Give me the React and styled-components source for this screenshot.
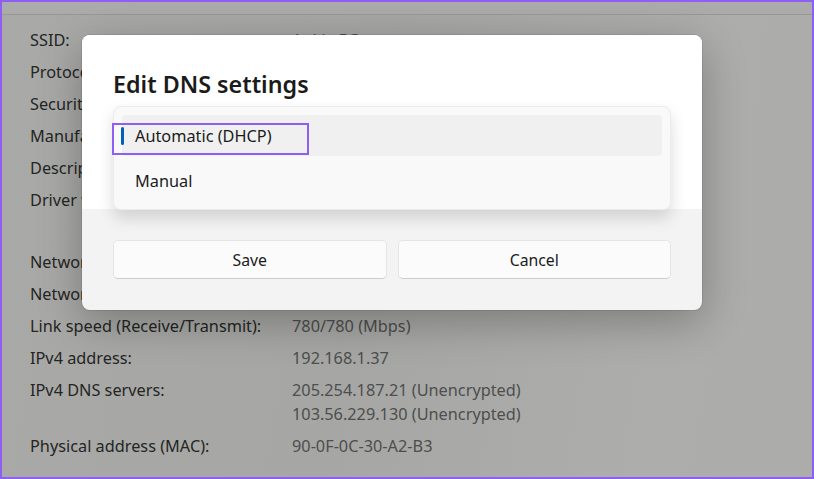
import React from 'react'
import styled, {createGlobalStyle} from 'styled-components'

const GlobalStyle = createGlobalStyle`
  html, body { margin: 0; padding: 0; }
  body { font-family: "Noto Sans", "Open Sans", sans-serif; }
`

const Frame = styled.div`
  position: relative;
  width: 814px;
  height: 479px;
  box-sizing: border-box;
  border: 2px solid #8d5ff5;
  overflow: hidden;
  background: linear-gradient(100deg, #a9aaa7 0%, #a6a7a4 45%, #adaeab 80%, #acadaa 100%);
`

const TopBar = styled.div`
  height: 12px;
  border-bottom: 1px solid #979896;
  background: #aaabaa;
`

const Details = styled.div`
  padding: 9px 0 0 28px;
  display: flex;
  flex-direction: column;
`

const Section = styled.div`
  display: flex;
  flex-direction: column;
  & + & { margin-top: 30px; }
`

const Row = styled.div`
  display: grid;
  grid-template-columns: 262px 1fr;
  padding: 4px 0;
  line-height: 24px;
  font-size: 16.3px;
  >.label { color: #242524; }
  >.value { color: #4d4e4d; display: flex; flex-direction: column; }
`

const Dialog = styled.div`
  position: absolute;
  left: 80px;
  top: 33px;
  width: 620px;
  height: 275px;
  border-radius: 8px;
  background: #f3f3f3;
  box-shadow: 0 0 0 1px rgba(0,0,0,0.08), 0 12px 44px rgba(0,0,0,0.28);
  display: flex;
  flex-direction: column;
`

const DialogBody = styled.div`
  position: relative;
  height: 174px;
  box-sizing: border-box;
  background: #ffffff;
  border-radius: 8px 8px 0 0;
  padding: 34px 31px 0 31px;
`

const Title = styled.h2`
  margin: 0;
  font-size: 23.3px;
  font-weight: 600;
  line-height: 30px;
  color: #1b1b1b;
`

const Popup = styled.div`
  position: absolute;
  left: 31px;
  top: 71px;
  width: 558px;
  box-sizing: border-box;
  padding: 8px;
  display: flex;
  flex-direction: column;
  gap: 4px;
  background: #f9f9f9;
  border: 1px solid rgba(0,0,0,0.05);
  border-radius: 8px;
  box-shadow: 0 8px 16px rgba(0,0,0,0.14);
`

const Option = styled.div`
  position: relative;
  height: 41px;
  display: flex;
  align-items: center;
  padding-left: 13px;
  border-radius: 4px;
  font-size: 16.3px;
  color: #1b1b1b;
  background: ${p => p.selected ? '#f0f0f0' : 'transparent'};
`

const Indicator = styled.span`
  position: absolute;
  left: -1px;
  top: 12px;
  width: 3px;
  height: 18px;
  border-radius: 2px;
  background: #005fb8;
`

const Highlight = styled.span`
  position: absolute;
  left: -10px;
  top: 8px;
  width: 197px;
  height: 32px;
  box-sizing: border-box;
  border: 2px solid #8d5ff5;
`

const Footer = styled.div`
  flex: 1;
  display: grid;
  grid-template-columns: 1fr 1fr;
  gap: 11px;
  padding: 31px 31px 0 31px;
  align-items: start;
`

const Button = styled.button`
  height: 39px;
  border-radius: 5px;
  border: 1px solid #e5e5e5;
  border-bottom-color: #cccccc;
  background: #fbfbfb;
  font-family: "Noto Sans", "Open Sans", sans-serif;
  font-size: 15.8px;
  color: #1b1b1b;
`

const rows1 = [
  ['SSID:', ['Ankit_5G']],
  ['Protocol:', ['Wi-Fi 5 (802.11ac)']],
  ['Security type:', ['WPA2-Personal']],
  ['Manufacturer:', ['Intel Corporation']],
  ['Description:', ['Intel(R) Wi-Fi 6 AX201 160MHz']],
  ['Driver version:', ['22.150.0.3']],
]

const rows2 = [
  ['Network band:', ['5 GHz']],
  ['Network channel:', ['36']],
  ['Link speed (Receive/Transmit):', ['780/780 (Mbps)']],
  ['IPv4 address:', ['192.168.1.37']],
  ['IPv4 DNS servers:', ['205.254.187.21 (Unencrypted)', '103.56.229.130 (Unencrypted)']],
  ['Physical address (MAC):', ['90-0F-0C-30-A2-B3']],
]

function InfoRow({label, values}) {
  return (
    <Row>
      <span className='label'>{label}</span>
      <span className='value'>{values.map(v => <span key={v}>{v}</span>)}</span>
    </Row>
  )
}

export default function App() {
  return (
    <>
      <GlobalStyle />
      <Frame>
        <TopBar />
        <Details>
          <Section>
            {rows1.map(([l, v]) => <InfoRow key={l} label={l} values={v} />)}
          </Section>
          <Section>
            {rows2.map(([l, v]) => <InfoRow key={l} label={l} values={v} />)}
          </Section>
        </Details>

        <Dialog>
          <DialogBody>
            <Title>Edit DNS settings</Title>
            <Popup>
              <Option selected>
                <Indicator />
                Automatic (DHCP)
                <Highlight />
              </Option>
              <Option>Manual</Option>
            </Popup>
          </DialogBody>
          <Footer>
            <Button>Save</Button>
            <Button>Cancel</Button>
          </Footer>
        </Dialog>
      </Frame>
    </>
  )
}
